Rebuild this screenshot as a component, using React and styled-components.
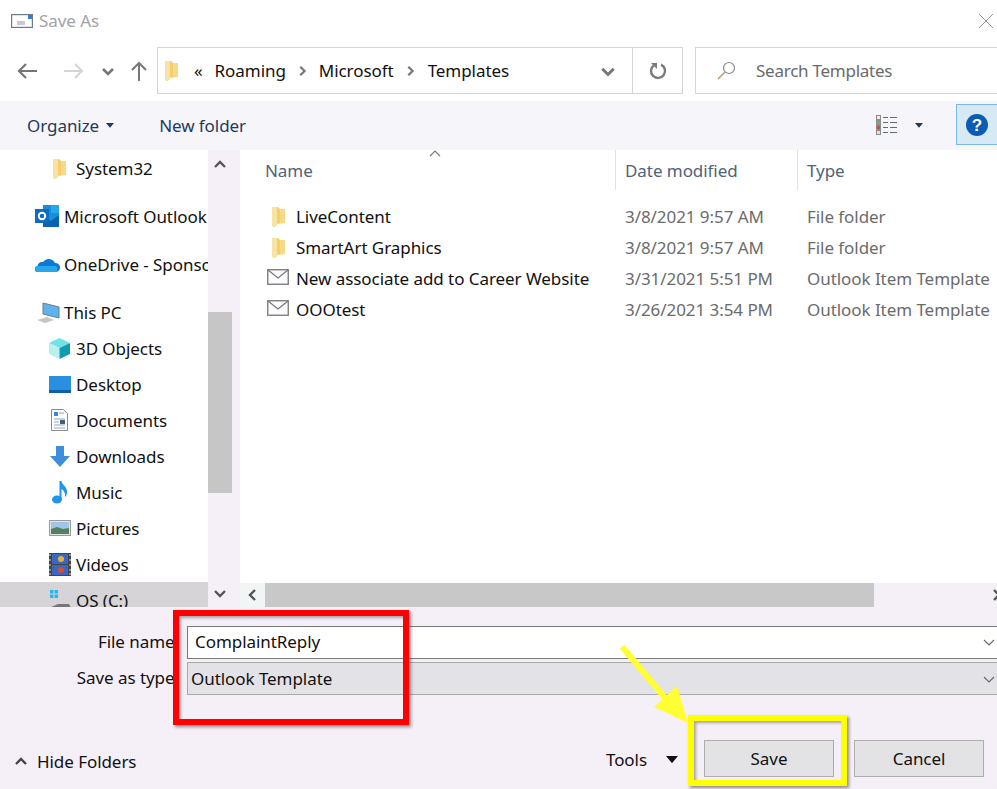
import React from "react";
import styled, { createGlobalStyle, css } from "styled-components";

const Global = createGlobalStyle`
  html, body { margin: 0; padding: 0; background: #fff; }
  * { box-sizing: border-box; }
`;

const dither = css`
  background-color: #fbfdfd;
  background-image:
    repeating-linear-gradient(90deg, rgba(240,190,240,.12) 0 1px, rgba(190,240,225,.12) 1px 2px),
    repeating-linear-gradient(0deg, rgba(240,190,240,.08) 0 1px, rgba(190,240,225,.08) 1px 2px);
`;
const ditherFooter = css`
  background-color: #f7f8f9;
  background-image:
    repeating-linear-gradient(90deg, rgba(225,190,235,.10) 0 1px, rgba(190,230,225,.10) 1px 2px),
    repeating-linear-gradient(0deg, rgba(225,190,235,.08) 0 1px, rgba(190,230,225,.08) 1px 2px);
`;

const Page = styled.div`
  position: relative; width: 997px; height: 789px; overflow: hidden;
  display: flex; flex-direction: column; background: #fff;
  font-family: "Noto Sans", "Open Sans", sans-serif; font-size: 17px; letter-spacing: -0.06px; color: #111;
`;
const TitleBar = styled.div`
  height: 47px; flex: none; display: flex; align-items: center; padding: 0 3px 6px 11px;
`;
const TitleText = styled.span`
  margin-left: 6px; color: #a2a2a2; flex: 1;
`;
const AddressRow = styled.div`
  height: 54px; flex: none; display: flex; align-items: flex-start;
`;
const NavButtons = styled.div`
  width: 157px; height: 47px; flex: none; display: flex; align-items: center; padding-left: 17px;
`;
const NavSlot = styled.span`
  display: flex; align-items: center; justify-content: center; margin-left: ${p => p.$ml || 0}px;
`;
const AddressBox = styled.div`
  width: 526px; height: 47px; flex: none; display: flex; align-items: center;
  border: 1px solid #d4d4d4; padding-left: 6px;
`;
const Crumb = styled.span`
  margin-left: ${p => p.$ml || 0}px; white-space: nowrap;
`;
const AddressEnd = styled.div`
  margin-left: auto; display: flex; align-items: center; height: 100%;
`;
const Refresh = styled.span`
  width: 50px; height: 100%; border-left: 1px solid #d4d4d4; display: flex; align-items: center; justify-content: center; margin-left: 16px;
`;
const SearchBox = styled.div`
  margin-left: 12px; width: 310px; height: 47px; flex: none; display: flex; align-items: center;
  border: 1px solid #d4d4d4; padding-left: 21px; color: #6a6a6a;
`;
const SearchText = styled.span`
  margin-left: 20px; letter-spacing: -0.25px;
`;
const CommandBar = styled.div`
  ${dither}; height: 49px; flex: none; display: flex; align-items: center; position: relative; padding-left: 27px; color: #1f3a5c;
`;
const Command = styled.span`
  display: flex; align-items: center; margin-left: ${p => p.$ml || 0}px;
`;
const CaretGap = styled.span`
  width: ${p => p.$w}px; flex: none;
`;
const CommandEnd = styled.div`
  margin-left: auto; display: flex; align-items: center; height: 100%;
`;
const HelpButton = styled.span`
  width: 42px; height: 41px; margin-left: 33px; margin-right: -1px; margin-top: -2px;
  display: flex; align-items: center; justify-content: center;
  background: #d8e9f6; border: 1px solid #7ab8e8;
`;
const Body = styled.div`
  height: 457px; flex: none; display: flex; overflow: hidden;
`;
const NavPane = styled.div`
  width: 208px; flex: none; overflow: hidden;
`;
const NavRow = styled.div`
  height: 36px; display: flex; align-items: center; white-space: nowrap;
  padding-left: ${p => (p.$depth === 2 ? 47 : 35)}px;
  margin-top: ${p => (p.$section ? 12 : 0)}px;
  ${p => p.$selected && css`background: #d6d4d6;`}
`;
const NavIcon = styled.span`
  width: 25px; height: 25px; flex: none; display: flex; align-items: center; justify-content: center; margin-right: 4px;
`;
const VScroll = styled.div`
  ${ditherFooter}; width: 24px; flex: none; display: flex; flex-direction: column; align-items: stretch;
`;
const ScrollBtn = styled.span`
  height: ${p => p.$h}px; flex: none; display: flex; justify-content: center; padding-top: ${p => p.$pt || 0}px;
`;
const VThumb = styled.div`
  height: 181px; flex: none; background: #c6c6c6;
`;
const Gutter = styled.div`
  ${ditherFooter}; width: 8px; flex: none;
`;
const Main = styled.div`
  flex: 1; min-width: 0; display: flex; flex-direction: column; position: relative;
`;
const HeaderRow = styled.div`
  height: 40px; flex: none; display: grid; grid-template-columns: 376px 182px 1fr; color: #4f6278; position: relative;
`;
const HeaderCell = styled.span`
  display: flex; align-items: center; height: 100%; padding-left: ${p => p.$pl}px; padding-top: 1px;
  border-right: ${p => (p.$line ? "1px solid #e4dfe6" : "none")};
`;
const SortMark = styled.span`
  position: absolute; left: 189px; top: 0; display: flex;
`;
const FileList = styled.div`
  flex: 1; padding-top: 11px;
`;
const FileRow = styled.div`
  height: 31px; display: grid; grid-template-columns: 376px 182px 1fr; align-items: center; white-space: nowrap;
`;
const FileName = styled.span`
  display: flex; align-items: center; padding-left: 26px;
`;
const FileIcon = styled.span`
  width: 24px; height: 24px; flex: none; display: flex; align-items: center; justify-content: center; margin-right: 6px;
  padding-bottom: ${p => p.$lift || 0}px;
`;
const FileMeta = styled.span`
  color: #6b6b6b; padding-left: 9px;
`;
const HScroll = styled.div`
  ${ditherFooter}; height: 24px; flex: none; display: flex; align-items: center; margin-top: auto;
`;
const HBtn = styled.span`
  width: 25px; height: 100%; flex: none; display: flex; align-items: center; justify-content: center; background: #f1f5f5;
`;
const HThumb = styled.div`
  width: 609px; height: 100%; flex: none; background: #c8c8c8;
`;
const HEnd = styled.span`
  margin-left: auto; margin-right: -6px; display: flex;
`;
const Footer = styled.div`
  ${ditherFooter}; flex: 1; min-height: 0; display: flex; flex-direction: column; padding-top: 19px;
`;
const Field = styled.div`
  display: grid; grid-template-columns: 179px 1fr; column-gap: 8px; align-items: center; height: 33px; margin-bottom: 3px;
`;
const FieldLabel = styled.label`
  text-align: right; white-space: nowrap; padding-bottom: 2px;
`;
const FieldBox = styled.div`
  height: 33px; display: flex; align-items: center; justify-content: space-between; margin-right: -1px;
  padding: 0 1px ${p => (p.$type ? 0 : 2)}px ${p => (p.$type ? 3 : 7)}px;
  background: ${p => (p.$type ? "#e3e2e6" : "#fff")};
  border: 1px solid ${p => (p.$type ? "#a9a9a9" : "#7a7a7a")};
`;
const Actions = styled.div`
  margin-top: auto; height: 37px; margin-bottom: 12px; display: flex; align-items: center; padding-left: 14px;
`;
const HideFolders = styled.span`
  display: flex; align-items: center; gap: 9px; flex: 1; padding-top: 6px;
`;
const Tools = styled.span`
  display: flex; align-items: center; gap: 19px; margin-right: 26px; padding-top: 2px;
`;
const DialogButton = styled.button`
  width: 130px; height: 37px; margin-right: ${p => p.$mr}px; padding: 0; font: inherit; letter-spacing: inherit; color: #111;
  background: #e3e2e5; border: 1px solid #adadad;
`;
const Highlight = styled.div`
  position: absolute; left: ${p => p.$x}px; top: ${p => p.$y}px; width: ${p => p.$w}px; height: ${p => p.$h}px;
  border: ${p => p.$b}px solid ${p => p.$c}; box-shadow: 2px 2px 3px rgba(70,70,70,.6), inset 2px 2px 3px rgba(70,70,70,.45); pointer-events: none;
`;
const ArrowOverlay = styled.svg`
  position: absolute; left: 615px; top: 640px; pointer-events: none;
`;

const Chevron = ({ dir = "down", size = 14, color = "#555", w = 2.6 }) => {
  const pts = { down: "2,5 7,10 12,5", up: "2,9 7,4 12,9", left: "9,2 4,7 9,12", right: "5,2 10,7 5,12" }[dir];
  return <svg width={size} height={size} viewBox="0 0 14 14"><polyline points={pts} fill="none" stroke={color} strokeWidth={w} /></svg>;
};
const Caret = ({ color = "#1f3a5c", w = 8 }) => (
  <svg width={w} height={w * 0.6} viewBox="0 0 10 6"><polygon points="0,0 10,0 5,6" fill={color} /></svg>
);
const Folder = () => (
  <svg width="15" height="21" viewBox="0 0 15 21">
    <path d="M1 1h6l2 2h5v14l-9 1-1 3-3-1z" fill="#f4cf6c" />
    <path d="M9 3h5v14H9z" fill="#f7da85" />
    <path d="M1 1h5v19H1z" fill="#f8e3a4" />
  </svg>
);
const Mail = () => (
  <svg width="22" height="16" viewBox="0 0 22 16">
    <rect x="0.75" y="0.75" width="20.5" height="14.5" fill="#fbfbfd" stroke="#777" strokeWidth="1.3" />
    <polyline points="1,1 11,9 21,1" fill="none" stroke="#777" strokeWidth="1.2" />
  </svg>
);
const Outlook = () => (
  <svg width="25" height="24" viewBox="0 0 25 24">
    <rect x="8" y="1" width="16" height="22" fill="#1490df" />
    <rect x="16" y="1" width="8" height="8" fill="#28a8ea" />
    <path d="M8 12l8 5 8-6v12H8z" fill="#0a64ad" />
    <rect x="0" y="5" width="14" height="14" fill="#0f6cbd" />
    <circle cx="7" cy="12" r="3.2" fill="none" stroke="#fff" strokeWidth="2" />
  </svg>
);
const OneDrive = () => (
  <svg width="25" height="17" viewBox="0 0 25 17">
    <path d="M3 16a3 3 0 0 1-.5-6A5 5 0 0 1 8 6a7 7 0 0 1 12 1 4.5 4.5 0 0 1 1 9z" fill="#0f78d4" />
    <path d="M3 16a3 3 0 0 1 0-6h18a4.5 4.5 0 0 1 0 6z" fill="#28a8ea" />
  </svg>
);
const ThisPC = () => (
  <svg width="24" height="21" viewBox="0 0 24 21">
    <path d="M7 1l16 4v11L7 12z" fill="#5db4ec" stroke="#6c7c88" strokeWidth="1" />
    <path d="M1 18l10-3 7 3-9 3z" fill="#c4c6ca" />
  </svg>
);
const Cube = () => (
  <svg width="23" height="23" viewBox="0 0 23 23">
    <path d="M11.5 1L22 6l-10.5 5L1 6z" fill="#6fe3e5" />
    <path d="M1 6l10.5 5v11L1 17z" fill="#b8f0ef" />
    <path d="M22 6v11l-10.5 5V11z" fill="#0f9bb0" />
  </svg>
);
const Desktop = () => (
  <svg width="22" height="17" viewBox="0 0 22 17">
    <rect width="22" height="17" fill="#2a8fde" />
    <rect y="14" width="22" height="3" fill="#0d5fa8" />
  </svg>
);
const Documents = () => (
  <svg width="17" height="22" viewBox="0 0 17 22">
    <path d="M.5.5h12l4 4v17H.5z" fill="#fff" stroke="#8b8b8b" />
    <rect x="3" y="3" width="4" height="4" fill="#3c86d8" />
    <path d="M8 4h5M3 10h11M3 13h5M3 16h11M3 19h11" stroke="#8fa1b8" />
    <rect x="9" y="11" width="5" height="4" fill="#40607a" />
  </svg>
);
const Download = () => (
  <svg width="20" height="21" viewBox="0 0 20 21">
    <path d="M6 0h8v10h6l-10 11L0 10h6z" fill="#3e8ee0" />
  </svg>
);
const Music = () => (
  <svg width="17" height="23" viewBox="0 0 17 23">
    <ellipse cx="6" cy="18.5" rx="5" ry="4" fill="#1e96ea" />
    <path d="M8.5 18V0h2c.5 4 6.5 6 5.5 12-.3 2-1 3-2 4 .5-4-1-6.5-3.5-8v10z" fill="#1e96ea" />
  </svg>
);
const Pictures = () => (
  <svg width="22" height="16" viewBox="0 0 22 16">
    <rect x=".5" y=".5" width="21" height="15" fill="#dfe6ea" stroke="#9a9a9a" />
    <rect x="2" y="2" width="18" height="7" fill="#9fc6e6" />
    <path d="M2 9l6-2 6 2 6-1v6H2z" fill="#54805f" />
  </svg>
);
const Videos = () => (
  <svg width="22" height="23" viewBox="0 0 22 23">
    <rect width="22" height="23" fill="#444" />
    <path d="M1 1v2M1 6v2M1 11v2M1 16v2M1 20v2M21 1v2M21 6v2M21 11v2M21 16v2M21 20v2" stroke="#ddd" />
    <rect x="3" y="1" width="16" height="10" fill="#3a66c4" />
    <rect x="3" y="12" width="16" height="10" fill="#3a66c4" />
    <circle cx="12" cy="6" r="3" fill="#e3b23a" />
    <circle cx="12" cy="17" r="3" fill="#d24f2f" />
  </svg>
);
const Drive = () => (
  <svg width="24" height="24" viewBox="0 0 24 24">
    <rect x="2" y="2" width="3.5" height="3.5" fill="#22b8f0" />
    <rect x="6.5" y="2" width="3.5" height="3.5" fill="#22b8f0" />
    <rect x="2" y="6.5" width="3.5" height="3.5" fill="#22b8f0" />
    <rect x="6.5" y="6.5" width="3.5" height="3.5" fill="#22b8f0" />
    <path d="M1 20l9-4h11l2 4z" fill="#777" />
    <path d="M1 20h22v3H1z" fill="#f2f2f2" />
  </svg>
);

const navItems = [
  { label: "System32", depth: 2, icon: <Folder /> },
  { label: "Microsoft Outlook", depth: 1, section: true, icon: <Outlook /> },
  { label: "OneDrive - Sponsored", depth: 1, section: true, icon: <OneDrive /> },
  { label: "This PC", depth: 1, section: true, icon: <ThisPC /> },
  { label: "3D Objects", depth: 2, icon: <Cube /> },
  { label: "Desktop", depth: 2, icon: <Desktop /> },
  { label: "Documents", depth: 2, icon: <Documents /> },
  { label: "Downloads", depth: 2, icon: <Download /> },
  { label: "Music", depth: 2, icon: <Music /> },
  { label: "Pictures", depth: 2, icon: <Pictures /> },
  { label: "Videos", depth: 2, icon: <Videos /> },
  { label: "OS (C:)", depth: 2, icon: <Drive />, selected: true },
];

const files = [
  { name: "LiveContent", date: "3/8/2021 9:57 AM", type: "File folder", icon: <Folder />, lift: 0 },
  { name: "SmartArt Graphics", date: "3/8/2021 9:57 AM", type: "File folder", icon: <Folder />, lift: 0 },
  { name: "New associate add to Career Website", date: "3/31/2021 5:51 PM", type: "Outlook Item Template", icon: <Mail />, lift: 4 },
  { name: "OOOtest", date: "3/26/2021 3:54 PM", type: "Outlook Item Template", icon: <Mail />, lift: 4 },
];

export default function App() {
  return (
    <Page>
      <Global />
      <TitleBar>
        <svg width="22" height="14" viewBox="0 0 22 14">
          <rect x=".6" y=".6" width="20.8" height="12.8" fill="#fff" stroke="#6f7a86" strokeWidth="1.2" />
          <rect x="17" y="1" width="4" height="4" fill="#2f7fd6" />
          <path d="M6 8h8M6 10h8" stroke="#8b96a2" />
        </svg>
        <TitleText>Save As</TitleText>
        <svg width="16" height="16" viewBox="0 0 16 16"><path d="M1 1l14 14M15 1L1 15" stroke="#9a9a9a" strokeWidth="1" /></svg>
      </TitleBar>
      <AddressRow>
        <NavButtons>
          <NavSlot>
            <svg width="21" height="16" viewBox="0 0 21 16"><path d="M20 8H2M9 1L2 8l7 7" fill="none" stroke="#767676" strokeWidth="2.2" /></svg>
          </NavSlot>
          <NavSlot $ml={25}>
            <svg width="21" height="16" viewBox="0 0 21 16"><path d="M1 8h18M12 1l7 7-7 7" fill="none" stroke="#d4d4d4" strokeWidth="2" /></svg>
          </NavSlot>
          <NavSlot $ml={17}><Chevron size={14} color="#777" /></NavSlot>
          <NavSlot $ml={15}>
            <svg width="18" height="20" viewBox="0 0 18 20"><path d="M9 20V2M2 9l7-7 7 7" fill="none" stroke="#777" strokeWidth="2" /></svg>
          </NavSlot>
        </NavButtons>
        <AddressBox>
          <Folder />
          <Crumb $ml={15}>«</Crumb>
          <Crumb $ml={12}>Roaming</Crumb>
          <Crumb $ml={10}><Chevron dir="right" size={12} color="#777" /></Crumb>
          <Crumb $ml={11}>Microsoft</Crumb>
          <Crumb $ml={10}><Chevron dir="right" size={12} color="#777" /></Crumb>
          <Crumb $ml={12}>Templates</Crumb>
          <AddressEnd>
            <Chevron size={16} color="#777" />
            <Refresh>
              <svg width="18" height="18" viewBox="0 0 18 18">
                <path d="M5 3.2A7 7 0 1 0 12 2.6" fill="none" stroke="#7a7a7a" strokeWidth="2.4" />
                <polygon points="1,1 7,1 7,7" fill="#7a7a7a" transform="translate(1 0)" />
              </svg>
            </Refresh>
          </AddressEnd>
        </AddressBox>
        <SearchBox>
          <svg width="19" height="19" viewBox="0 0 19 19">
            <circle cx="12" cy="7" r="5.5" fill="none" stroke="#8a8a8a" strokeWidth="1.2" />
            <path d="M8 11l-7 7" stroke="#c09a70" strokeWidth="1.6" />
          </svg>
          <SearchText>Search Templates</SearchText>
        </SearchBox>
      </AddressRow>
      <CommandBar>
        <Command>Organize<CaretGap $w={7} /><Caret /></Command>
        <Command $ml={45}>New folder</Command>
        <CommandEnd>
          <svg width="22" height="21" viewBox="0 0 22 21">
            <rect x=".5" y=".5" width="4" height="4" fill="#e9f0e6" stroke="#8c8c8c" />
            <rect x=".5" y="5.5" width="4" height="4" fill="#7ba77b" stroke="#8c8c8c" />
            <rect x=".5" y="10.5" width="4" height="4" fill="#d0503a" stroke="#8c8c8c" />
            <rect x=".5" y="15.5" width="4" height="4" fill="#dce6c8" stroke="#8c8c8c" />
            <path d="M7 2.5h5M14 2.5h7M7 7.5h5M14 7.5h7M7 12.5h5M14 12.5h7M7 17.5h5M14 17.5h7" stroke="#5d6b7a" />
          </svg>
          <CaretGap $w={17} />
          <Caret />
          <HelpButton>
            <svg width="22" height="22" viewBox="0 0 22 22">
              <circle cx="11" cy="11" r="11" fill="#0a5cb4" />
              <text x="11" y="17" textAnchor="middle" fontSize="17" fontWeight="700" fill="#fff" fontFamily="Liberation Sans">?</text>
            </svg>
          </HelpButton>
        </CommandEnd>
      </CommandBar>
      <Body>
        <NavPane>
          {navItems.map(n => (
            <NavRow key={n.label} $depth={n.depth} $section={n.section} $selected={n.selected}>
              <NavIcon>{n.icon}</NavIcon>
              {n.label}
            </NavRow>
          ))}
        </NavPane>
        <VScroll>
          <ScrollBtn $h={162} $pt={8}><Chevron dir="up" size={14} color="#555" w={2.4} /></ScrollBtn>
          <VThumb />
          <ScrollBtn $h={114} $pt={93}><Chevron size={14} color="#555" w={2.4} /></ScrollBtn>
        </VScroll>
        <Gutter />
        <Main>
          <HeaderRow>
            <HeaderCell $pl={25} $line>Name</HeaderCell>
            <HeaderCell $pl={9} $line>Date modified</HeaderCell>
            <HeaderCell $pl={9}>Type</HeaderCell>
            <SortMark><svg width="12" height="7" viewBox="0 0 12 7"><polyline points="1,6 6,1 11,6" fill="none" stroke="#777" strokeWidth="1.1" /></svg></SortMark>
          </HeaderRow>
          <FileList>
            {files.map(f => (
              <FileRow key={f.name}>
                <FileName><FileIcon $lift={f.lift}>{f.icon}</FileIcon>{f.name}</FileName>
                <FileMeta>{f.date}</FileMeta>
                <FileMeta>{f.type}</FileMeta>
              </FileRow>
            ))}
          </FileList>
          <HScroll>
            <HBtn><Chevron dir="left" size={14} color="#555" w={2.4} /></HBtn>
            <HThumb />
            <HEnd><Chevron dir="right" size={14} color="#555" w={2.4} /></HEnd>
          </HScroll>
        </Main>
      </Body>
      <Footer>
        <Field>
          <FieldLabel>File name:</FieldLabel>
          <FieldBox>ComplaintReply<Chevron size={14} color="#666" w={1.1} /></FieldBox>
        </Field>
        <Field>
          <FieldLabel>Save as type:</FieldLabel>
          <FieldBox $type>Outlook Template<Chevron size={14} color="#666" w={1.1} /></FieldBox>
        </Field>
        <Actions>
          <HideFolders><Chevron dir="up" size={14} color="#444" w={2.4} />Hide Folders</HideFolders>
          <Tools>Tools<Caret color="#111" w={12} /></Tools>
          <DialogButton $mr={20}>Save</DialogButton>
          <DialogButton $mr={13}>Cancel</DialogButton>
        </Actions>
      </Footer>
      <Highlight $x={173} $y={610} $w={236} $h={115} $b={6} $c="#ff0000" />
      <Highlight $x={688} $y={715} $w={159} $h={71} $b={6} $c="#ffff00" />
      <ArrowOverlay width="80" height="90" viewBox="0 0 80 90">
        <path d="M9 9l52 62" stroke="#ffff33" strokeWidth="6" strokeLinecap="square" />
        <polygon points="73,83 39,67 62,46" fill="#ffff33" />
      </ArrowOverlay>
    </Page>
  );
}
